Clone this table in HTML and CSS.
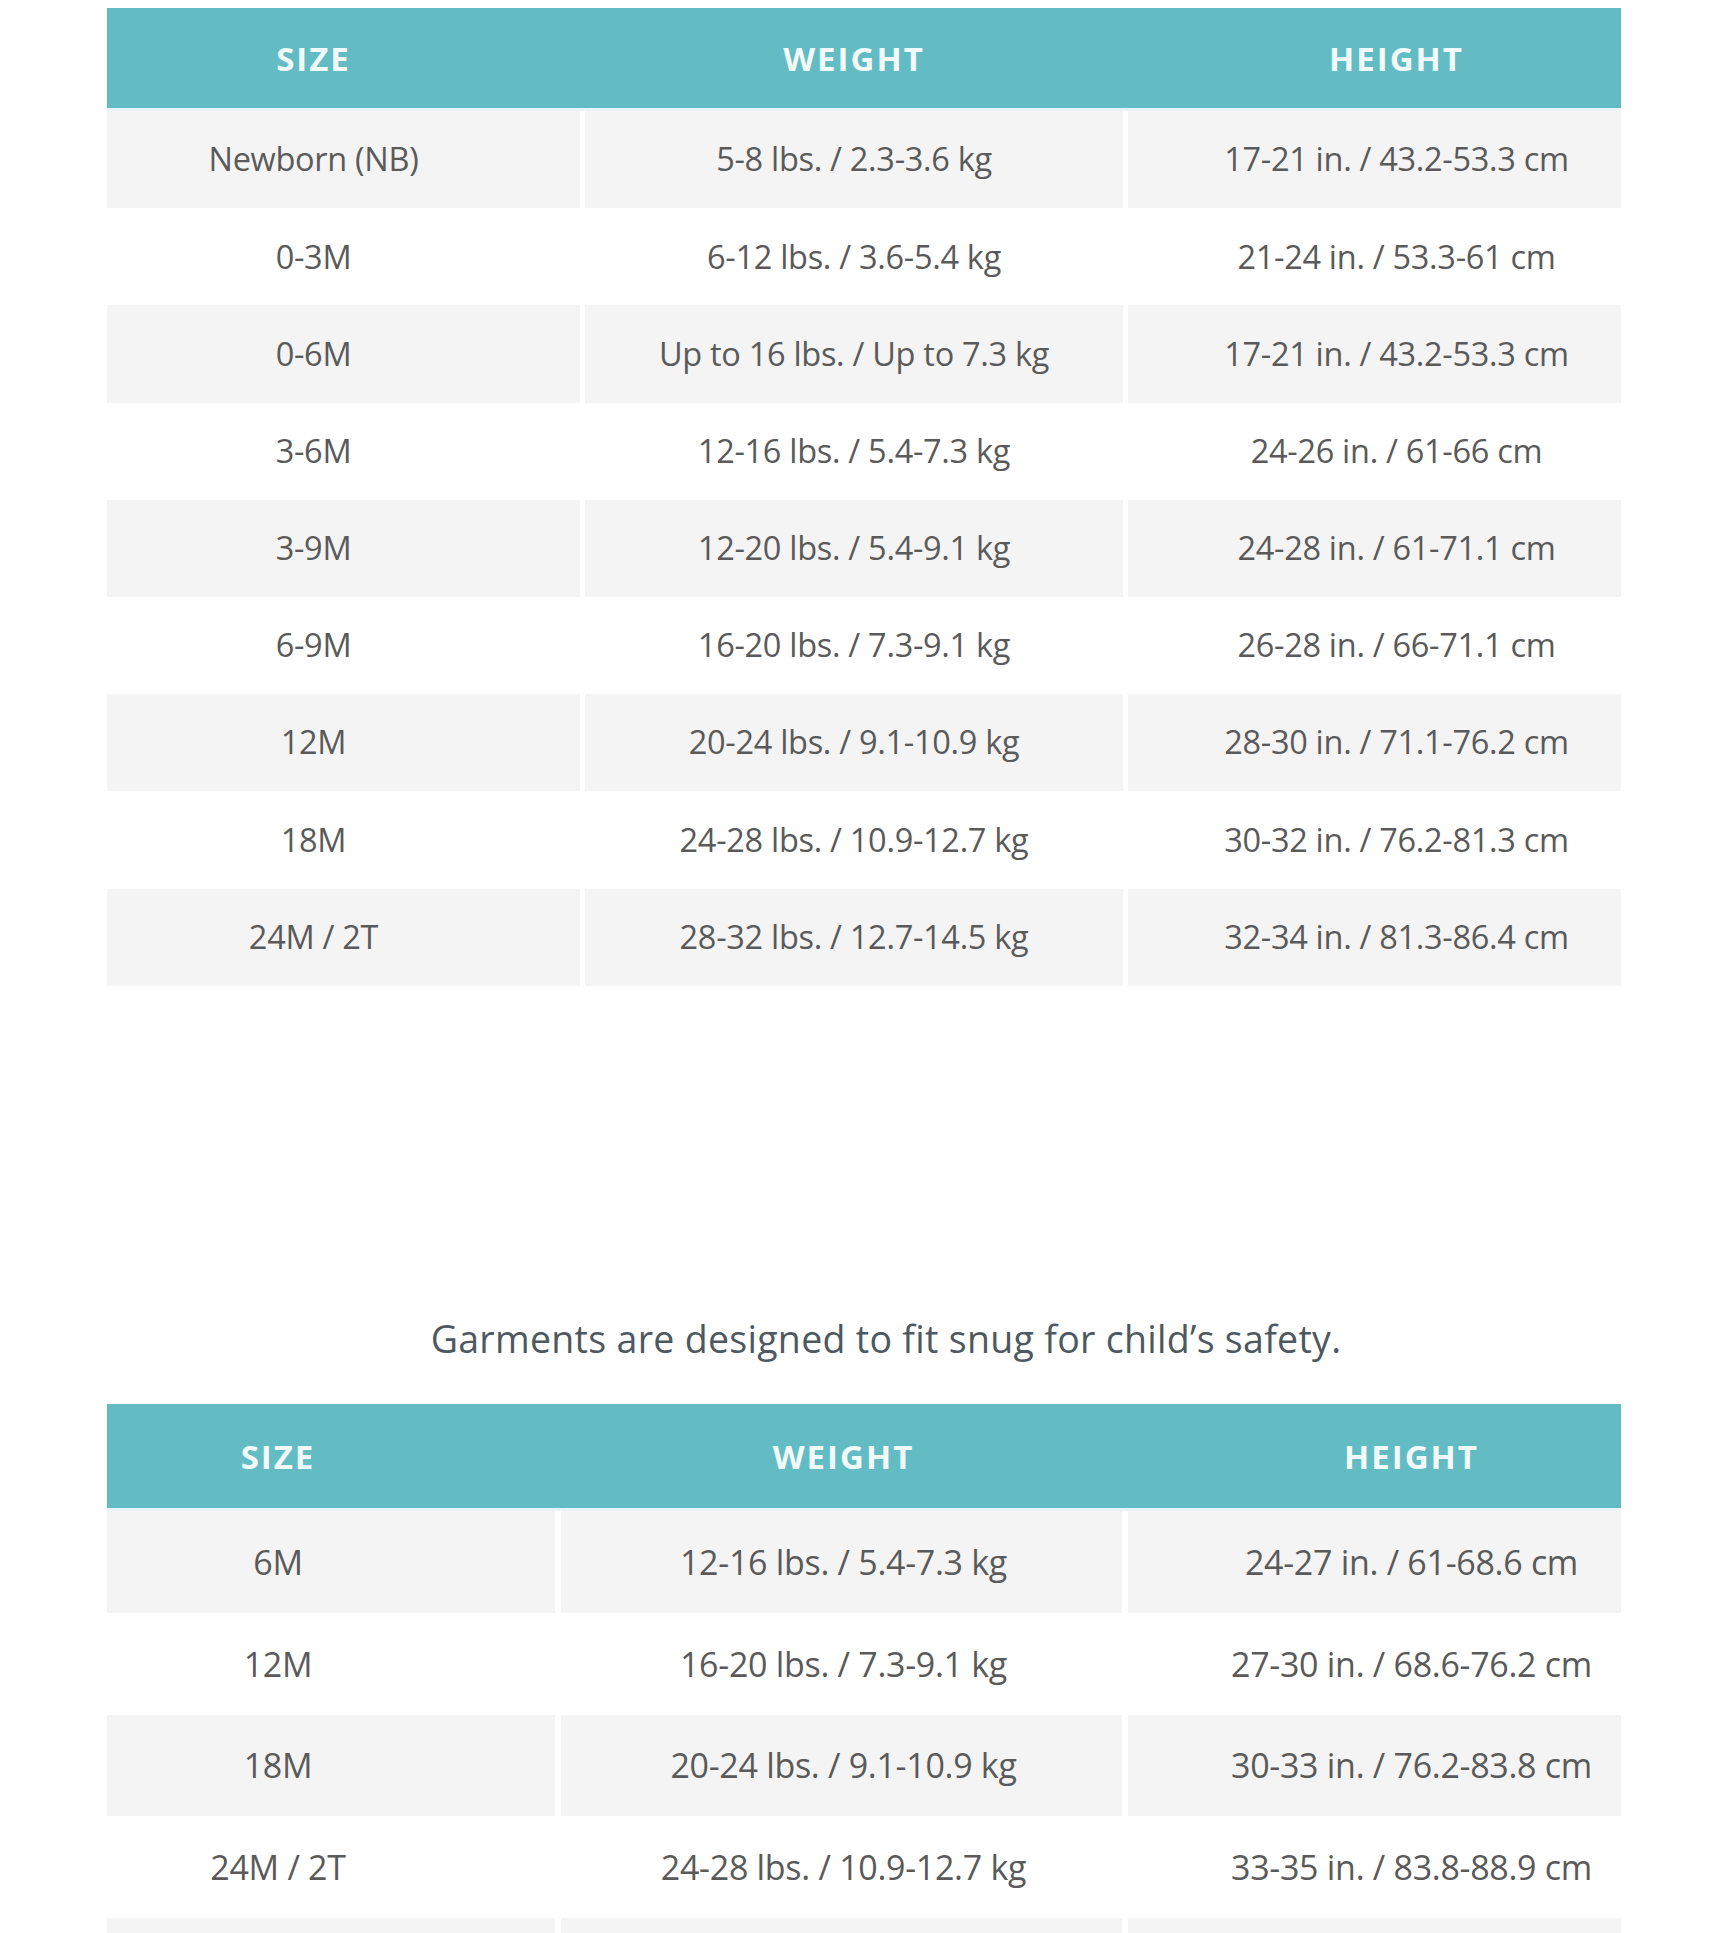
FILE: index.html
```html
<!DOCTYPE html>
<html lang="en">
<head>
<meta charset="utf-8">
<title>Size Chart</title>
<link rel="stylesheet" href="styles.css">
</head>
<body>
<div class="chart chart-a">
  <div class="head">
    <div class="hcell c1">SIZE</div>
    <div class="hcell c2">WEIGHT</div>
    <div class="hcell c3">HEIGHT</div>
  </div>
  <div class="row shade"><div class="cell c1">Newborn (NB)</div><div class="cell c2">5-8 lbs. / 2.3-3.6 kg</div><div class="cell c3">17-21 in. / 43.2-53.3 cm</div></div>
  <div class="row"><div class="cell c1">0-3M</div><div class="cell c2">6-12 lbs. / 3.6-5.4 kg</div><div class="cell c3">21-24 in. / 53.3-61 cm</div></div>
  <div class="row shade"><div class="cell c1">0-6M</div><div class="cell c2">Up to 16 lbs. / Up to 7.3 kg</div><div class="cell c3">17-21 in. / 43.2-53.3 cm</div></div>
  <div class="row"><div class="cell c1">3-6M</div><div class="cell c2">12-16 lbs. / 5.4-7.3 kg</div><div class="cell c3">24-26 in. / 61-66 cm</div></div>
  <div class="row shade"><div class="cell c1">3-9M</div><div class="cell c2">12-20 lbs. / 5.4-9.1 kg</div><div class="cell c3">24-28 in. / 61-71.1 cm</div></div>
  <div class="row"><div class="cell c1">6-9M</div><div class="cell c2">16-20 lbs. / 7.3-9.1 kg</div><div class="cell c3">26-28 in. / 66-71.1 cm</div></div>
  <div class="row shade"><div class="cell c1">12M</div><div class="cell c2">20-24 lbs. / 9.1-10.9 kg</div><div class="cell c3">28-30 in. / 71.1-76.2 cm</div></div>
  <div class="row"><div class="cell c1">18M</div><div class="cell c2">24-28 lbs. / 10.9-12.7 kg</div><div class="cell c3">30-32 in. / 76.2-81.3 cm</div></div>
  <div class="row shade"><div class="cell c1">24M / 2T</div><div class="cell c2">28-32 lbs. / 12.7-14.5 kg</div><div class="cell c3">32-34 in. / 81.3-86.4 cm</div></div>
</div>

<p class="note">Garments are designed to fit snug for child’s safety.</p>

<div class="chart chart-b">
  <div class="head">
    <div class="hcell c1">SIZE</div>
    <div class="hcell c2">WEIGHT</div>
    <div class="hcell c3">HEIGHT</div>
  </div>
  <div class="row shade"><div class="cell c1">6M</div><div class="cell c2">12-16 lbs. / 5.4-7.3 kg</div><div class="cell c3">24-27 in. / 61-68.6 cm</div></div>
  <div class="row"><div class="cell c1">12M</div><div class="cell c2">16-20 lbs. / 7.3-9.1 kg</div><div class="cell c3">27-30 in. / 68.6-76.2 cm</div></div>
  <div class="row shade"><div class="cell c1">18M</div><div class="cell c2">20-24 lbs. / 9.1-10.9 kg</div><div class="cell c3">30-33 in. / 76.2-83.8 cm</div></div>
  <div class="row"><div class="cell c1">24M / 2T</div><div class="cell c2">24-28 lbs. / 10.9-12.7 kg</div><div class="cell c3">33-35 in. / 83.8-88.9 cm</div></div>
  <div class="row shade"><div class="cell c1"></div><div class="cell c2"></div><div class="cell c3"></div></div>
</div>
</body>
</html>
```
FILE: styles.css
```css
html, body {
  margin: 0;
  padding: 0;
  background: #ffffff;
}

body {
  font-family: "Open Sans", "Noto Sans", "Liberation Sans", sans-serif;
  color: #5a5a5a;
}

.chart {
  width: 1514px;
  margin-left: 107px;
}

.chart-a {
  margin-top: 8px;
}

.head,
.row {
  display: grid;
}

.chart-a .head,
.chart-a .row {
  grid-template-columns: 473px 538px 493px;
  column-gap: 5px;
}

.chart-b .head,
.chart-b .row {
  grid-template-columns: 448px 561px 493px;
  column-gap: 6px;
}

.head {
  background: #63bbc4;
  border-bottom: 3px solid #e6f4f7;
}

.chart-a .head { height: 100px; }
.chart-b .head { height: 104px; }

.hcell,
.cell {
  display: flex;
  align-items: center;
  justify-content: center;
  line-height: 1;
  white-space: nowrap;
}

.hcell {
  color: #f1fbfb;
  font-weight: 700;
  font-size: 33px;
  letter-spacing: 2px;
}

.cell {
  letter-spacing: -0.3px;
}

.chart-a .cell { font-size: 32.5px; }
.chart-b .cell { font-size: 34px; }

.chart-a .row { height: 97.2px; }
.chart-b .row { height: 101.7px; }

.row.shade .cell {
  background: #f4f4f4;
}

.chart-a .c1 { padding-right: 60px; }
.chart-a .c3 { padding-left: 44px; }

.chart-b .c1 { padding-right: 106px; }
.chart-b .c2 { padding-left: 4px; }
.chart-b .c3 { padding-left: 74px; }

.note {
  margin: 334px 0 47px 0;
  padding-left: 44px;
  text-align: center;
  font-size: 37.5px;
  line-height: 1;
  letter-spacing: 0.3px;
  color: #4d5860;
}
```
